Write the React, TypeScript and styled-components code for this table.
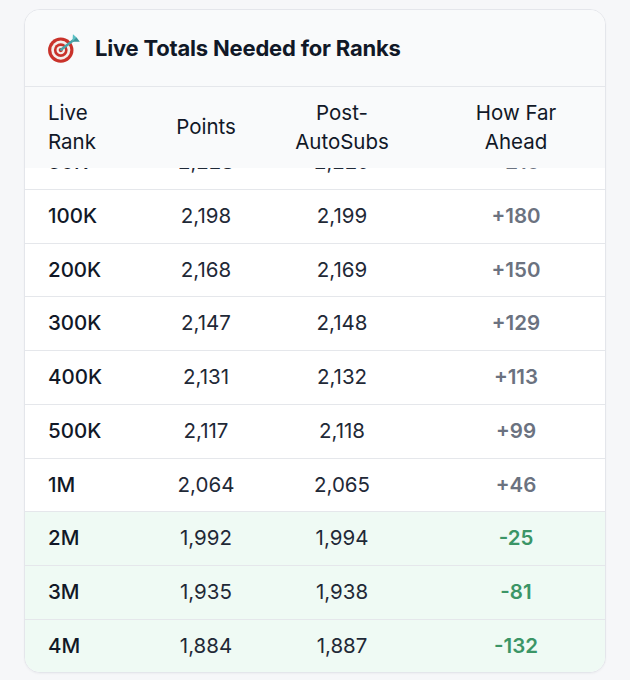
import React, { useLayoutEffect, useRef } from 'react';
import styled, { createGlobalStyle } from 'styled-components';

const GlobalStyle = createGlobalStyle`
  html, body {
    margin: 0;
    padding: 0;
    background: #f6f7f9;
    font-family: Inter, 'Noto Sans', 'Liberation Sans', sans-serif;
    -webkit-font-smoothing: antialiased;
  }
`;

const Page = styled.div`
  padding: 9px 24px 7px;
`;

const Card = styled.div`
  height: 664px;
  box-sizing: border-box;
  background: #ffffff;
  border: 1px solid #e4e6eb;
  border-radius: 16px;
  overflow: hidden;
  display: flex;
  flex-direction: column;
  box-shadow: 0 1px 2px rgba(15, 23, 42, 0.04);
`;

const CardHeader = styled.div`
  display: flex;
  align-items: center;
  gap: 12px;
  padding: 0 22px;
  height: 76px;
  flex-shrink: 0;
  background: #f9fafb;
  border-bottom: 1px solid #e5e7eb;
`;

const Title = styled.h2`
  margin: 0;
  font-size: 22px;
  font-weight: 700;
  color: #111827;
  letter-spacing: -0.2px;
`;

const ScrollArea = styled.div`
  flex: 1;
  overflow-y: auto;
  scrollbar-width: none;

  &::-webkit-scrollbar {
    display: none;
  }
`;

const Table = styled.table`
  width: 100%;
  table-layout: fixed;
  border-collapse: collapse;
  font-size: 20.5px;
  line-height: 1.4;
`;

const HeadCell = styled.th<{ $left?: boolean; $w: number }>`
  position: sticky;
  top: 0;
  z-index: 1;
  box-sizing: border-box;
  width: ${(p) => p.$w}px;
  padding: ${(p) => (p.$left ? '12px 8px 12px 23px' : '12px 4px')};
  text-align: ${(p) => (p.$left ? 'left' : 'center')};
  font-weight: 400;
  color: #111827;
  background: #f9fafb;
`;

const Row = styled.tr<{ $behind?: boolean }>`
  background: ${(p) => (p.$behind ? '#effaf4' : '#ffffff')};
  border-top: 1px solid #e5e7eb;
`;

const Cell = styled.td<{ $left?: boolean }>`
  box-sizing: border-box;
  padding: 12px 4px 12px ${(p) => (p.$left ? '23px' : '4px')};
  text-align: ${(p) => (p.$left ? 'left' : 'center')};
  color: #1f2937;
  font-weight: 400;
`;

const RankCell = styled(Cell)`
  color: #111827;
  font-weight: 500;
`;

const DiffCell = styled(Cell)<{ $behind?: boolean }>`
  font-weight: 600;
  color: ${(p) => (p.$behind ? '#3b9566' : '#6b7280')};
`;

const TargetIcon = () => (
  <svg width="36" height="32" viewBox="0 0 34 30">
    <circle cx="13" cy="17" r="12" fill="#c9322a" />
    <circle cx="13" cy="17" r="9" fill="#f4eeea" />
    <circle cx="13" cy="17" r="6.5" fill="#c9322a" />
    <circle cx="13" cy="17" r="4" fill="#f4eeea" />
    <circle cx="13" cy="17" r="2" fill="#c9322a" />
    <path d="M13.5 16.5 L27 6" stroke="#4aa3a8" strokeWidth="2.4" strokeLinecap="round" />
    <path d="M24 9 L24.5 2 L28 5 Z" fill="#5bc0c4" />
    <path d="M24 9 L31 9 L28 5 Z" fill="#3f959b" />
  </svg>
);

type RankRow = { rank: string; points: string; post: string; diff: string };

const rows: RankRow[] = [
  { rank: '50K', points: '2,228', post: '2,229', diff: '+210' },
  { rank: '100K', points: '2,198', post: '2,199', diff: '+180' },
  { rank: '200K', points: '2,168', post: '2,169', diff: '+150' },
  { rank: '300K', points: '2,147', post: '2,148', diff: '+129' },
  { rank: '400K', points: '2,131', post: '2,132', diff: '+113' },
  { rank: '500K', points: '2,117', post: '2,118', diff: '+99' },
  { rank: '1M', points: '2,064', post: '2,065', diff: '+46' },
  { rank: '2M', points: '1,992', post: '1,994', diff: '-25' },
  { rank: '3M', points: '1,935', post: '1,938', diff: '-81' },
  { rank: '4M', points: '1,884', post: '1,887', diff: '-132' },
];

const App: React.FC = () => {
  const scrollRef = useRef<HTMLDivElement>(null);

  useLayoutEffect(() => {
    const el = scrollRef.current;
    if (el) el.scrollTop = el.scrollHeight;
  }, []);

  return (
    <Page>
      <GlobalStyle />
      <Card>
        <CardHeader>
          <TargetIcon />
          <Title>Live Totals Needed for Ranks</Title>
        </CardHeader>
        <ScrollArea ref={scrollRef}>
          <Table>
            <thead>
              <tr>
                <HeadCell $left $w={130}>
                  Live
                  <br />
                  Rank
                </HeadCell>
                <HeadCell $w={102}>Points</HeadCell>
                <HeadCell $w={170}>
                  Post-
                  <br />
                  AutoSubs
                </HeadCell>
                <HeadCell $w={178}>
                  How Far
                  <br />
                  Ahead
                </HeadCell>
              </tr>
            </thead>
            <tbody>
              {rows.map((r) => {
                const behind = r.diff.startsWith('-');
                return (
                  <Row key={r.rank} $behind={behind}>
                    <RankCell $left>{r.rank}</RankCell>
                    <Cell>{r.points}</Cell>
                    <Cell>{r.post}</Cell>
                    <DiffCell $behind={behind}>{r.diff}</DiffCell>
                  </Row>
                );
              })}
            </tbody>
          </Table>
        </ScrollArea>
      </Card>
    </Page>
  );
};

export default App;
